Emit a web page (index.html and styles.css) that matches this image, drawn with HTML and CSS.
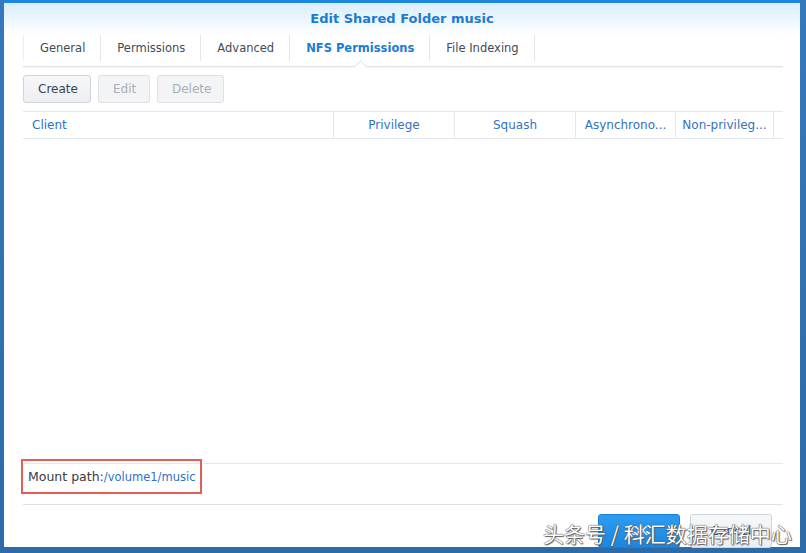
FILE: index.html
```html
<!DOCTYPE html>
<html lang="en">
<head>
    <meta charset="UTF-8">
    <title>Edit Shared Folder music</title>
    <link rel="stylesheet" href="styles.css">
</head>
<body>
    <div class="window">
        <div class="window-header">Edit Shared Folder music</div>

        <div class="window-body">
            <div class="tabs">
                <div class="tab">General</div>
                <div class="tab">Permissions</div>
                <div class="tab">Advanced</div>
                <div class="tab active">NFS Permissions</div>
                <div class="tab">File Indexing</div>
            </div>

            <div class="toolbar">
                <button class="btn">Create</button>
                <button class="btn" disabled>Edit</button>
                <button class="btn" disabled>Delete</button>
            </div>

            <div class="grid">
                <div class="grid-head">
                    <div class="col col-client">Client</div>
                    <div class="col col-priv">Privilege</div>
                    <div class="col col-squash">Squash</div>
                    <div class="col col-async">Asynchrono...</div>
                    <div class="col col-nonpriv">Non-privileg...</div>
                    <div class="col col-rest"></div>
                </div>
                <div class="grid-rows"></div>
            </div>

            <div class="mount">
                <span class="mount-label">Mount path:<span class="mount-path">/volume1/music</span></span>
            </div>

            <div class="footer">
                <button class="btn btn-primary">OK</button>
                <button class="btn">Cancel</button>
            </div>
        </div>
    </div>

    <div class="watermark">头条号 / 科汇数据存储中心</div>
</body>
</html>
```

FILE: styles.css
```css
body {
    margin: 0;
    width: 806px;
    height: 553px;
    overflow: hidden;
    background: linear-gradient(180deg, #3479bd, #2d6aa8);
    font-family: "DejaVu Sans", Verdana, sans-serif;
    position: relative;
}

.window {
    margin: 3px 6px 0 4px;
    height: 544px;
    background: #fff;
    display: flex;
    flex-direction: column;
    box-shadow: 0 -3px 0 #1d86e0;
}

.window-header {
    height: 32px;
    flex: none;
    background: linear-gradient(180deg, #d9edfd, #ffffff);
    color: #1b7bd3;
    font-weight: bold;
    font-size: 13px;
    line-height: 32px;
    text-align: center;
}

.window-body {
    flex: 1;
    display: flex;
    flex-direction: column;
    padding: 0 17px 0 19px;
}

/* Tabs */
.tabs {
    height: 31px;
    flex: none;
    display: flex;
    align-items: flex-start;
    border-bottom: 1px solid #dfe3e8;
    box-shadow: 0 1px 1px rgba(0, 0, 0, 0.04);
}

.tab {
    height: 26px;
    line-height: 26px;
    padding: 0 15px 0 16px;
    font-size: 11.5px;
    color: #414b55;
    border-right: 1px solid #e4e7ea;
    position: relative;
}

.tab:first-child {
    border-left: 1px solid #eceef0;
}

.tab.active {
    color: #1b7bd3;
    font-weight: bold;
}

.tab.active::after {
    content: "";
    position: absolute;
    left: 50%;
    bottom: -10px;
    width: 8px;
    height: 8px;
    margin-left: -4px;
    background: #fff;
    border-left: 1px solid #dfe3e8;
    border-top: 1px solid #dfe3e8;
    transform: rotate(45deg);
}

/* Buttons */
.toolbar {
    flex: none;
    display: flex;
    gap: 7px;
    margin-top: 8px;
}

.btn {
    height: 28px;
    padding: 0 14px;
    font-family: inherit;
    font-size: 12px;
    color: #3b444d;
    background: linear-gradient(180deg, #f6f7f9, #eceef1);
    border: 1px solid #cfd4da;
    border-radius: 3px;
}

.btn[disabled] {
    color: #a9afb6;
    border-color: #dde0e4;
    background: #f3f4f6;
}

.toolbar .btn:first-child { width: 68px; }
.toolbar .btn:nth-child(2) { width: 52px; }
.toolbar .btn:nth-child(3) { width: 67px; }

/* Grid */
.grid {
    flex: 1;
    display: flex;
    flex-direction: column;
    margin-top: 8px;
}

.grid-head {
    display: flex;
    height: 26px;
    border-top: 1px solid #e3e6ea;
    border-bottom: 1px solid #e3e6ea;
}

.col {
    font-size: 12px;
    color: #2f72c4;
    line-height: 26px;
    border-right: 1px solid #e6e9ec;
    text-align: center;
    white-space: nowrap;
    overflow: hidden;
}

.col-client { width: 311px; text-align: left; padding-left: 9px; box-sizing: border-box; }
.col-priv { width: 120px; }
.col-squash { width: 120px; }
.col-async { width: 99px; }
.col-nonpriv { width: 97px; }
.col-rest { flex: 1; border-right: 0; }

.grid-rows {
    flex: 1;
}

/* Mount path */
.mount {
    flex: none;
    height: 42px;
    border-top: 1px solid #e6e9ec;
    border-bottom: 1px solid #dfe2e6;
    box-sizing: border-box;
}

.mount-label {
    display: inline-block;
    margin: -5px 0 0 -2px;
    padding: 8px 5px 8px 5px;
    border: 2px solid #e35f55;
    font-size: 12.5px;
    color: #353c44;
}

.mount-path {
    font-size: 11.5px;
    color: #2f72c4;
}

/* Footer */
.footer {
    flex: none;
    height: 42px;
    display: flex;
    justify-content: flex-end;
    gap: 10px;
    padding: 9px 11px 0 0;
    box-sizing: border-box;
}

.footer .btn {
    width: 82px;
    height: 34px;
}

.btn-primary {
    color: #fff;
    background: linear-gradient(180deg, #2d9cf0, #1b86e0);
    border-color: #1a7fd4;
}

.watermark {
    position: absolute;
    left: 543px;
    top: 518px;
    font-family: "Noto Sans CJK SC", sans-serif;
    font-size: 21px;
    color: #fff;
    text-shadow: 0 0 1px #444, 0 0 1px #444, 1px 1px 1px #666;
}
```
